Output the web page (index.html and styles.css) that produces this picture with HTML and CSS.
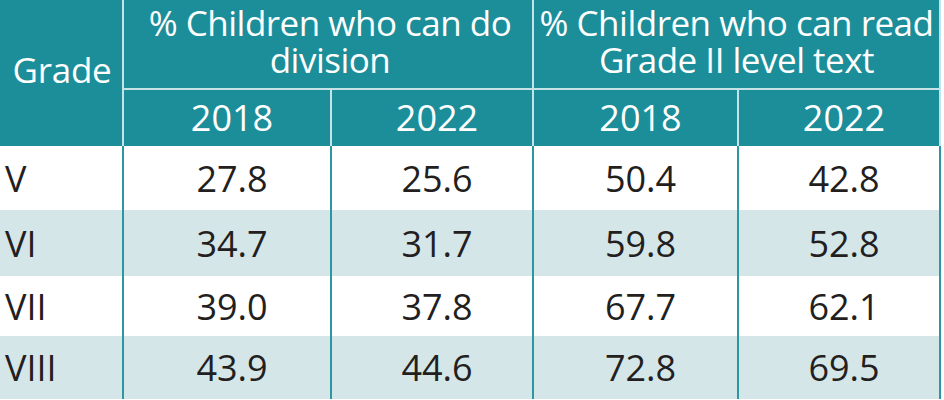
FILE: index.html
```html
<!DOCTYPE html>
<html lang="en">
<head>
<meta charset="utf-8">
<title>Learning levels</title>
<link rel="stylesheet" href="styles.css">
</head>
<body>
<div class="tbl">
  <div class="hd grade">Grade</div>
  <div class="hd group g1">% Children who can do division</div>
  <div class="hd group g2">% Children who can read Grade II level text</div>
  <div class="hd year y1">2018</div>
  <div class="hd year y2">2022</div>
  <div class="hd year y3">2018</div>
  <div class="hd year y4 last">2022</div>

  <div class="c lab r1">V</div><div class="c num r1">27.8</div><div class="c num r1">25.6</div><div class="c num r1">50.4</div><div class="c num r1 last">42.8</div>
  <div class="c lab r2 alt">VI</div><div class="c num r2 alt">34.7</div><div class="c num r2 alt">31.7</div><div class="c num r2 alt">59.8</div><div class="c num r2 alt last">52.8</div>
  <div class="c lab r3">VII</div><div class="c num r3">39.0</div><div class="c num r3">37.8</div><div class="c num r3">67.7</div><div class="c num r3 last">62.1</div>
  <div class="c lab r4 alt">VIII</div><div class="c num r4 alt">43.9</div><div class="c num r4 alt">44.6</div><div class="c num r4 alt">72.8</div><div class="c num r4 alt last">69.5</div>
</div>
</body>
</html>
```
FILE: styles.css
```css
html, body {
  margin: 0;
  padding: 0;
  background: #ffffff;
}
body {
  font-family: "Open Sans", "Noto Sans", "DejaVu Sans", sans-serif;
  font-weight: 400;
  width: 944px;
  height: 400px;
  overflow: hidden;
}
.tbl {
  display: grid;
  grid-template-columns: 122px 208px 202px 205px 204px;
  grid-template-rows: 88px 58px 64px 66px 60px 63px;
  width: 941px;
}
.hd {
  background: #1b8e9a;
  color: #ffffff;
  display: flex;
  align-items: center;
  justify-content: center;
  text-align: center;
  box-sizing: border-box;
}
.grade {
  grid-row: 1 / 3;
  grid-column: 1;
  font-size: 35px;
  letter-spacing: -0.3px;
  padding: 0 0 8px 2px;
}
.group {
  font-size: 35px;
  line-height: 37px;
  letter-spacing: -0.5px;
  border-left: 2px solid #c6e4e7;
  padding: 0 0 6px 4px;
}
.g1 { grid-column: 2 / 4; grid-row: 1; }
.g2 { grid-column: 4 / 6; grid-row: 1; border-right: 2px solid #c6e4e7; padding-left: 0; }
.year {
  grid-row: 2;
  font-size: 36px;
  border-top: 2px solid #c6e4e7;
  border-left: 2px solid #c6e4e7;
  padding: 0 0 2px 10px;
}
.y1 { grid-column: 2; }
.y2 { grid-column: 3; }
.y3 { grid-column: 4; }
.y4 { grid-column: 5; border-right: 2px solid #c6e4e7; }
.c {
  font-size: 36px;
  color: #231f20;
  display: flex;
  align-items: center;
  box-sizing: border-box;
}
.lab {
  padding-left: 5px;
}
.num {
  justify-content: center;
  border-left: 2px solid #2a97a2;
  padding-left: 10px;
}
.c.last { border-right: 2px solid #2a97a2; }
.alt { background: #d5e6e9; }
```
